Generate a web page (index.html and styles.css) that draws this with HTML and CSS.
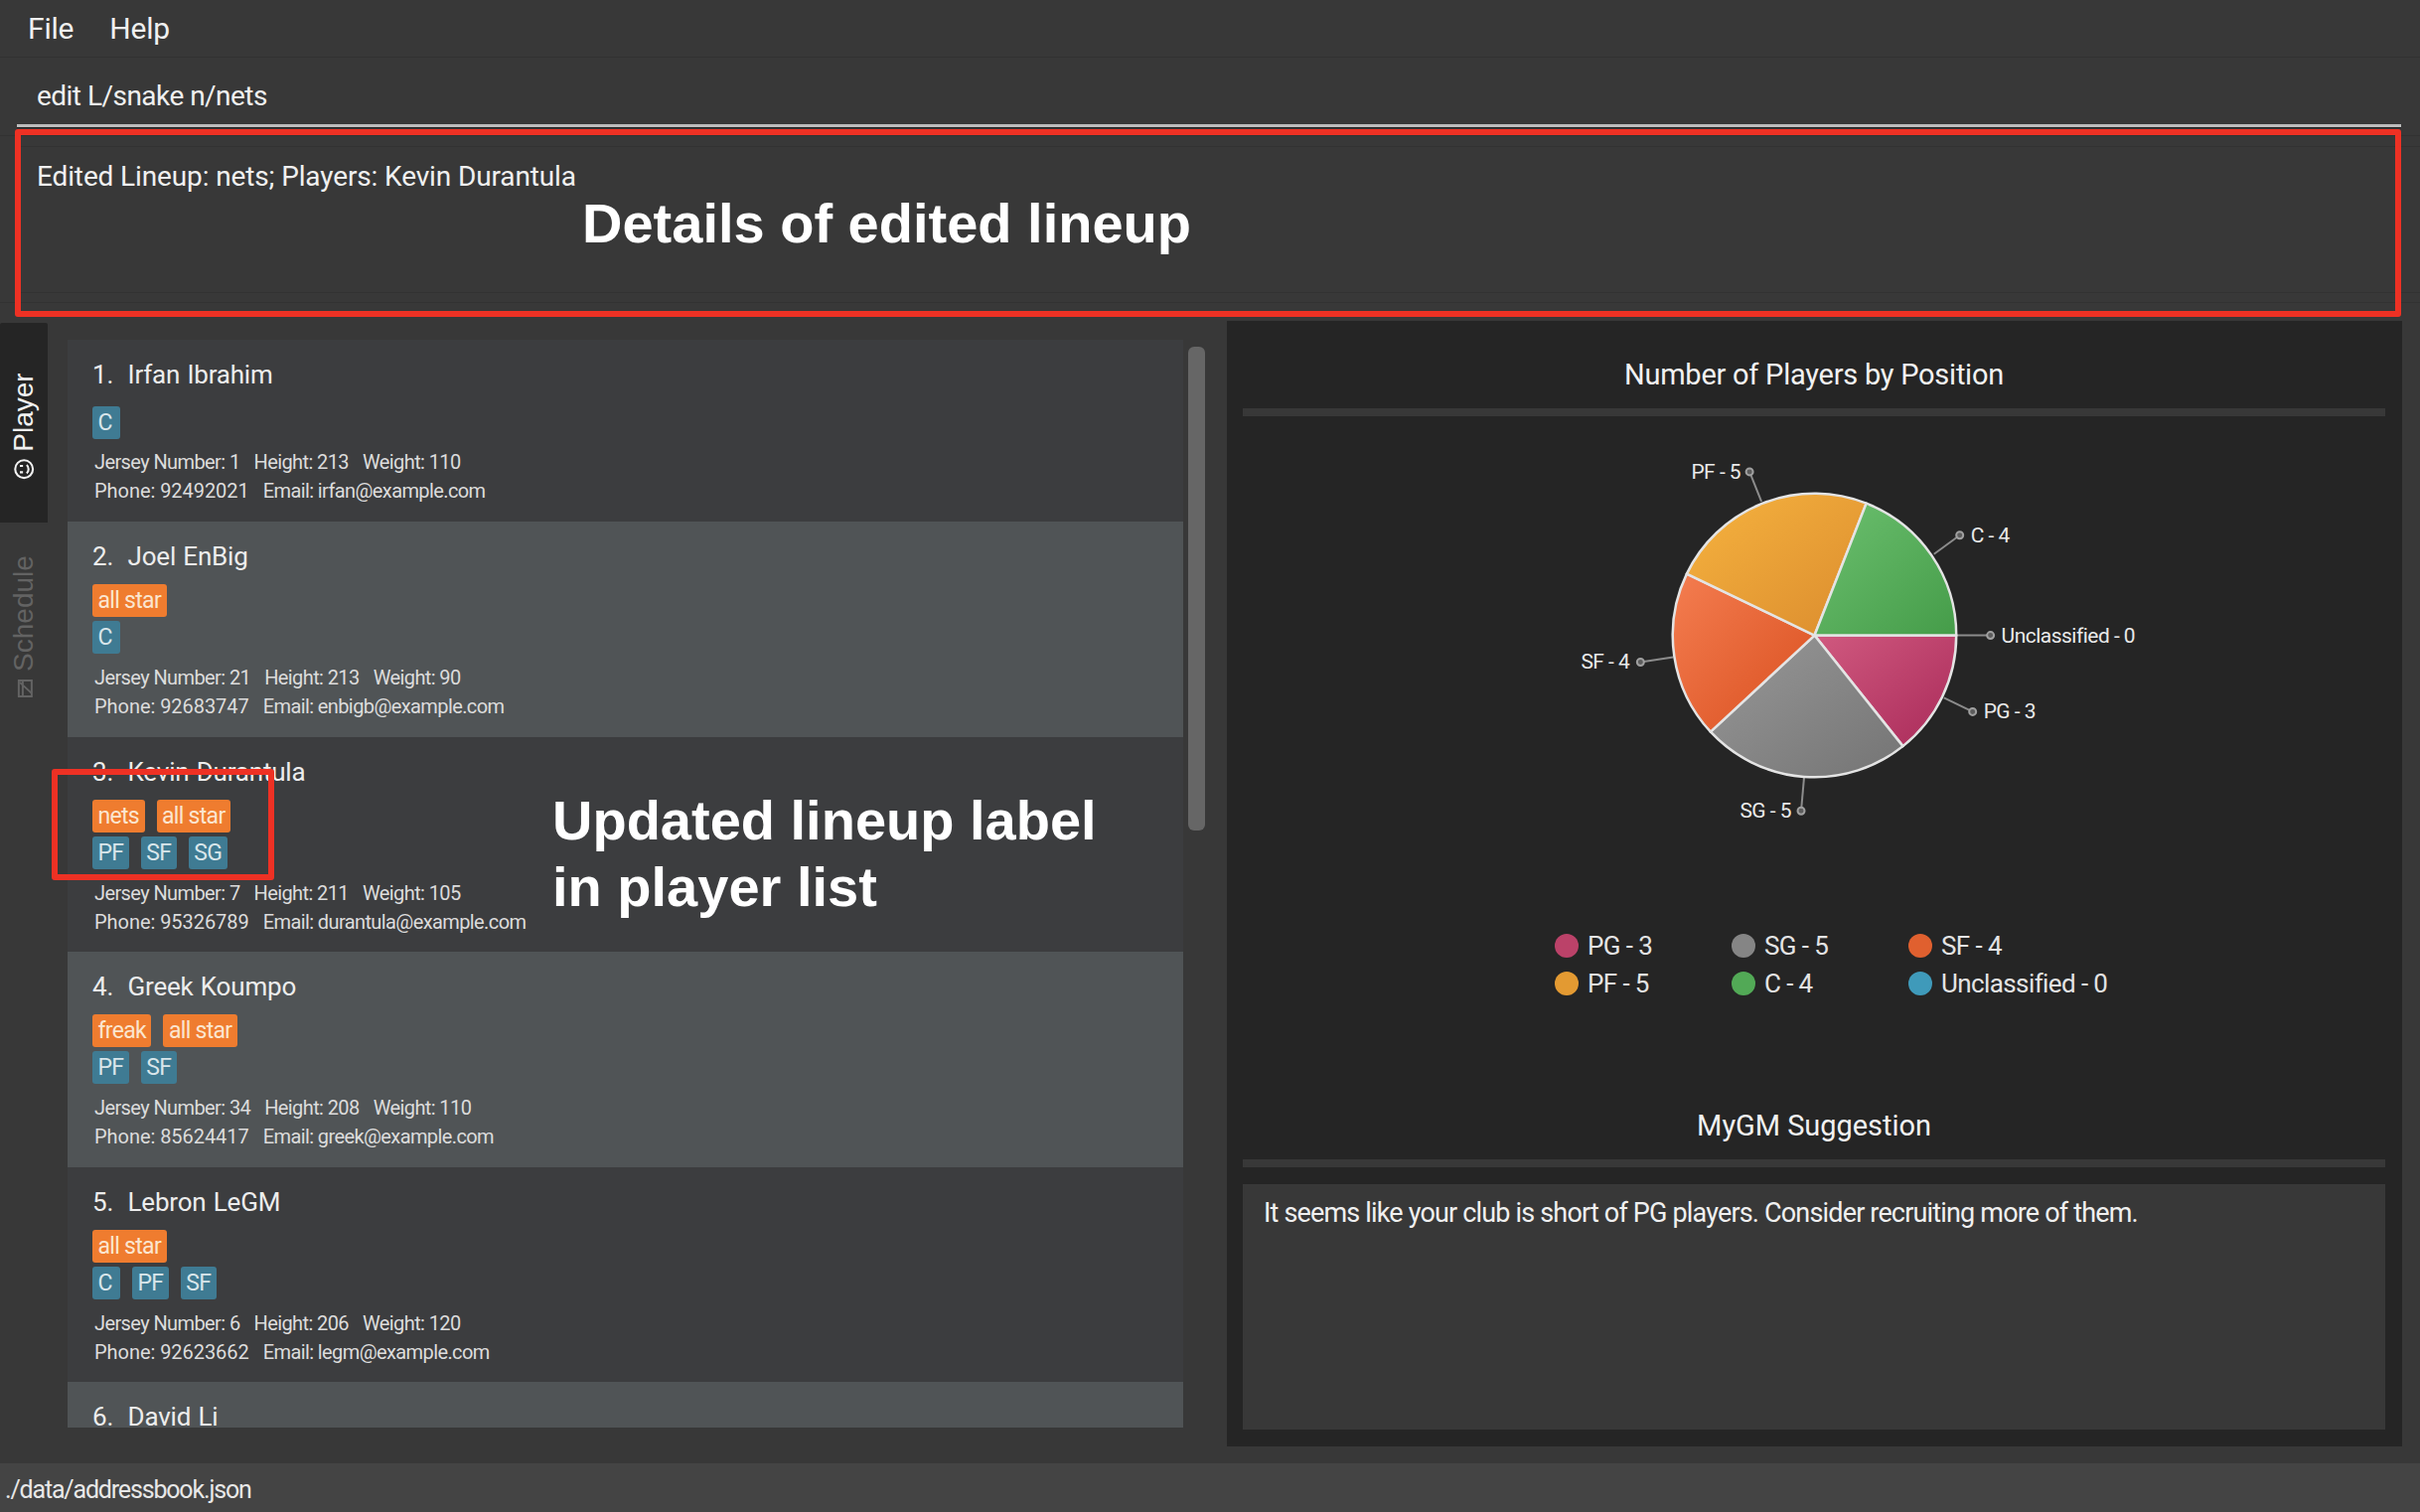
FILE: index.html
```html
<!DOCTYPE html>
<html lang="en">
<head>
    <meta charset="UTF-8">
    <title>MyGM</title>
    <link rel="stylesheet" href="styles.css">
</head>
<body>
<div class="window">
    <!-- Menu -->
    <div class="menu">
        <span>File</span>
        <span>Help</span>
    </div>

    <!-- Command box -->
    <div class="command">
        <div class="command-input">edit L/snake n/nets</div>
    </div>

    <!-- Result box -->
    <div class="result">
        <div class="result-text">Edited Lineup: nets; Players: Kevin Durantula</div>
    </div>

    <div class="main">
        <!-- Side tabs -->
        <div class="tabs">
            <div class="tab tab-active">
                <div class="tab-label">
                    <svg class="tab-icon" viewBox="0 0 20 20" fill="none" stroke="currentColor" stroke-width="2">
                        <circle cx="10" cy="10" r="8.5"/>
                        <path d="M6 12.5c1.8 2.4 6.2 2.4 8 0"/>
                        <path d="M7 6v3M13 6v3"/>
                    </svg>
                    <span>Player</span>
                </div>
            </div>
            <div class="tab">
                <div class="tab-label">
                    <svg class="tab-icon tab-icon-small" viewBox="0 0 20 20" fill="none" stroke="currentColor" stroke-width="2">
                        <path d="M2 5h16v13H2z"/>
                        <path d="M2 9h16M5 18L16 6"/>
                    </svg>
                    <span>Schedule</span>
                </div>
            </div>
        </div>

        <!-- Player list -->
        <div class="list">
            <div class="item item-single">
                <div class="name">1.&nbsp; Irfan Ibrahim</div>
                <div class="tags">
                    <div class="tag-row"><span class="tag tag-pos">C</span></div>
                </div>
                <div class="details">
                    <div class="detail-row"><span>Jersey Number: 1</span><span>Height: 213</span><span>Weight: 110</span></div>
                    <div class="detail-row"><span class="phone">Phone: 92492021</span><span>Email: irfan@example.com</span></div>
                </div>
            </div>
            <div class="item item-even">
                <div class="name">2.&nbsp; Joel EnBig</div>
                <div class="tags">
                    <div class="tag-row"><span class="tag tag-lineup">all star</span></div>
                    <div class="tag-row"><span class="tag tag-pos">C</span></div>
                </div>
                <div class="details">
                    <div class="detail-row"><span>Jersey Number: 21</span><span>Height: 213</span><span>Weight: 90</span></div>
                    <div class="detail-row"><span class="phone">Phone: 92683747</span><span>Email: enbigb@example.com</span></div>
                </div>
            </div>
            <div class="item">
                <div class="name">3.&nbsp; Kevin Durantula</div>
                <div class="tags">
                    <div class="tag-row"><span class="tag tag-lineup">nets</span><span class="tag tag-lineup">all star</span></div>
                    <div class="tag-row"><span class="tag tag-pos">PF</span><span class="tag tag-pos">SF</span><span class="tag tag-pos">SG</span></div>
                </div>
                <div class="details">
                    <div class="detail-row"><span>Jersey Number: 7</span><span>Height: 211</span><span>Weight: 105</span></div>
                    <div class="detail-row"><span class="phone">Phone: 95326789</span><span>Email: durantula@example.com</span></div>
                </div>
            </div>
            <div class="item item-even">
                <div class="name">4.&nbsp; Greek Koumpo</div>
                <div class="tags">
                    <div class="tag-row"><span class="tag tag-lineup">freak</span><span class="tag tag-lineup">all star</span></div>
                    <div class="tag-row"><span class="tag tag-pos">PF</span><span class="tag tag-pos">SF</span></div>
                </div>
                <div class="details">
                    <div class="detail-row"><span>Jersey Number: 34</span><span>Height: 208</span><span>Weight: 110</span></div>
                    <div class="detail-row"><span class="phone">Phone: 85624417</span><span>Email: greek@example.com</span></div>
                </div>
            </div>
            <div class="item">
                <div class="name">5.&nbsp; Lebron LeGM</div>
                <div class="tags">
                    <div class="tag-row"><span class="tag tag-lineup">all star</span></div>
                    <div class="tag-row"><span class="tag tag-pos">C</span><span class="tag tag-pos">PF</span><span class="tag tag-pos">SF</span></div>
                </div>
                <div class="details">
                    <div class="detail-row"><span>Jersey Number: 6</span><span>Height: 206</span><span>Weight: 120</span></div>
                    <div class="detail-row"><span class="phone">Phone: 92623662</span><span>Email: legm@example.com</span></div>
                </div>
            </div>
            <div class="item item-even">
                <div class="name">6.&nbsp; David Li</div>
            </div>
        </div>

        <div class="scroll-track"><div class="scroll-thumb"></div></div>

        <!-- Stats panel -->
        <div class="panel">
            <div class="panel-title">Number of Players by Position</div>
            <div class="panel-rule"></div>
            <svg class="pie" viewBox="1251 419 1150 511">
                <defs>
                    <linearGradient id="g-pg" x1="0" y1="0" x2="1" y2="1"><stop offset="0" stop-color="#d0597f"/><stop offset="1" stop-color="#a92a59"/></linearGradient>
                    <linearGradient id="g-sg" x1="0" y1="0" x2="1" y2="1"><stop offset="0" stop-color="#989898"/><stop offset="1" stop-color="#747474"/></linearGradient>
                    <linearGradient id="g-sf" x1="0" y1="0" x2="1" y2="1"><stop offset="0" stop-color="#f47d50"/><stop offset="1" stop-color="#d94f1f"/></linearGradient>
                    <linearGradient id="g-pf" x1="0" y1="0" x2="1" y2="1"><stop offset="0" stop-color="#f6b33f"/><stop offset="1" stop-color="#db8c2e"/></linearGradient>
                    <linearGradient id="g-c" x1="0" y1="0" x2="1" y2="1"><stop offset="0" stop-color="#6cc06f"/><stop offset="1" stop-color="#459c49"/></linearGradient>
                </defs>
                <g class="leaders">
                    <path d="M1773 505L1761 475"/>
                    <path d="M1947 558L1973 539"/>
                    <path d="M1969 640H2004"/>
                    <path d="M1957 703L1986 717"/>
                    <path d="M1816 783L1813 817"/>
                    <path d="M1684 662L1651 667"/>
                    <circle cx="1761" cy="475" r="3.5"/>
                    <circle cx="1973" cy="539" r="3.5"/>
                    <circle cx="2004" cy="640" r="3.5"/>
                    <circle cx="1986" cy="717" r="3.5"/>
                    <circle cx="1813" cy="817" r="3.5"/>
                    <circle cx="1651" cy="667" r="3.5"/>
                </g>
                <g class="slices">
                    <path fill="url(#g-pg)" d="M1826.5 640H1969.5A143 143 0 0 1 1915.66 751.8Z"/>
                    <path fill="url(#g-sg)" d="M1826.5 640L1915.66 751.8A143 143 0 0 1 1721.67 737.27Z"/>
                    <path fill="url(#g-sf)" d="M1826.5 640L1721.67 737.27A143 143 0 0 1 1697.66 577.95Z"/>
                    <path fill="url(#g-pf)" d="M1826.5 640L1697.66 577.95A143 143 0 0 1 1878.74 506.88Z"/>
                    <path fill="url(#g-c)" d="M1826.5 640L1878.74 506.88A143 143 0 0 1 1969.5 640Z"/>
                </g>
                <g class="pie-labels">
                    <text x="1752" y="482" text-anchor="end">PF - 5</text>
                    <text x="1984" y="546">C - 4</text>
                    <text x="2015" y="647">Unclassified - 0</text>
                    <text x="1997" y="724">PG - 3</text>
                    <text x="1803" y="824" text-anchor="end">SG - 5</text>
                    <text x="1640" y="674" text-anchor="end">SF - 4</text>
                </g>
            </svg>
            <div class="legend">
                <div class="legend-item"><span class="dot dot-pg"></span>PG - 3</div>
                <div class="legend-item"><span class="dot dot-sg"></span>SG - 5</div>
                <div class="legend-item"><span class="dot dot-sf"></span>SF - 4</div>
                <div class="legend-item"><span class="dot dot-pf"></span>PF - 5</div>
                <div class="legend-item"><span class="dot dot-c"></span>C - 4</div>
                <div class="legend-item"><span class="dot dot-un"></span>Unclassified - 0</div>
            </div>
            <div class="panel-title panel-title-second">MyGM Suggestion</div>
            <div class="panel-rule"></div>
            <div class="suggestion">It seems like your club is short of PG players. Consider recruiting more of them.</div>
        </div>
    </div>

    <div class="status">./data/addressbook.json</div>

    <!-- Annotations on top of the screenshot -->
    <div class="mark mark-result"></div>
    <div class="mark mark-label"></div>
    <div class="note note-result">Details of edited lineup</div>
    <div class="note note-label">Updated lineup label<br>in player list</div>
</div>
</body>
</html>
```

FILE: styles.css
```css
* {
    margin: 0;
    padding: 0;
    box-sizing: border-box;
}

body {
    font-family: Roboto, "Liberation Sans", sans-serif;
    background: #383838;
    color: #f0f0f0;
    overflow: hidden;
}

.window {
    position: relative;
    display: flex;
    flex-direction: column;
    width: 2436px;
    height: 1522px;
    overflow: hidden;
}

/* Menu */
.menu {
    display: flex;
    align-items: center;
    gap: 36px;
    height: 58px;
    padding-left: 28px;
    border-bottom: 1px solid #323232;
    font-size: 30px;
    letter-spacing: -0.2px;
}

/* Command box */
.command {
    height: 79px;
    padding: 0 19px 0 17px;
    border-bottom: 1px solid #323232;
}

.command-input {
    height: 70px;
    padding: 22px 0 0 20px;
    border-bottom: 3px solid #bdbdbd;
    box-shadow: 0 1px 0 #222;
    font-size: 28px;
    line-height: 34px;
    letter-spacing: -0.53px;
}

/* Result box */
.result {
    height: 168px;
    padding: 10px 0 10px 17px;
    border-bottom: 1px solid #323232;
}

.result-text {
    height: 148px;
    padding: 13px 0 0 20px;
    border-top: 1px solid #323232;
    border-bottom: 1px solid #323232;
    font-size: 28px;
    line-height: 34px;
    letter-spacing: -0.13px;
}

/* Main row */
.main {
    display: flex;
    flex: 1;
    min-height: 0;
    padding-top: 18px;
}

.tabs {
    width: 48px;
    margin-top: 2px;
}

.tab {
    display: flex;
    align-items: center;
    justify-content: center;
    width: 48px;
    height: 210px;
    color: #636363;
    font-family: "Liberation Sans", Arial, sans-serif;
    font-size: 28px;
}

.tab-active {
    height: 201px;
    padding-top: 6px;
    background: #252525;
    border-radius: 2px 2px 0 0;
    color: #f2f2f2;
}

.tab-label {
    display: flex;
    align-items: center;
    gap: 7px;
    transform: rotate(-90deg);
    white-space: nowrap;
}

.tab-icon {
    width: 21px;
    height: 21px;
}

.tab-icon-small {
    width: 20px;
    height: 20px;
}

/* Player list */
.list {
    width: 1123px;
    height: 1095px;
    margin: 19px 0 0 20px;
    overflow: hidden;
}

.item {
    padding: 18px 0 15.5px 25px;
    background: #3c3d3f;
}

.item-even {
    background: #505456;
}

.item-single {
    padding-bottom: 16px;
}

.name {
    font-size: 26px;
    line-height: 34px;
    letter-spacing: -0.2px;
    word-spacing: 1px;
    color: #ededed;
}

.tags {
    display: flex;
    flex-direction: column;
    gap: 4px;
    margin-top: 11px;
}

.item-single .tags {
    margin-top: 15px;
}

.tag-row {
    display: flex;
    gap: 12px;
}

.tag {
    min-width: 28px;
    height: 33px;
    padding: 0 5.5px;
    border-radius: 3px;
    font-size: 23px;
    line-height: 33px;
    letter-spacing: -0.7px;
}

.tag-lineup {
    background: #ef7c2f;
    color: #fbe6d0;
}

.tag-pos {
    background: #3f7b93;
    color: #d9e6ea;
}

.details {
    margin: 10px 0 0 2px;
    font-size: 20px;
    line-height: 29px;
    letter-spacing: -0.6px;
    color: #dcdcdc;
}

.item-single .details {
    margin-top: 9px;
}

.detail-row {
    display: flex;
    gap: 14px;
}

.phone {
    letter-spacing: -0.05px;
}

.scroll-track {
    width: 17px;
    margin: 26px 22px 0 5px;
}

.scroll-thumb {
    height: 487px;
    background: #666;
    border-radius: 6px;
}

/* Stats panel */
.panel {
    display: flex;
    flex-direction: column;
    width: 1183px;
    height: 1133px;
    padding: 0 17px 17px 16px;
    background: #252525;
}

.panel-title {
    height: 88px;
    padding-top: 37px;
    text-align: center;
    font-size: 29px;
    line-height: 34px;
    letter-spacing: -0.25px;
    color: #f2f2f2;
}

.panel-title-second {
    height: 72px;
    padding-top: 20px;
    letter-spacing: -0.05px;
}

.panel-rule {
    height: 8px;
    background: #383838;
}

.pie {
    display: block;
    width: 1150px;
    height: 511px;
}

.leaders path {
    fill: none;
    stroke: #8c8c8c;
    stroke-width: 2;
}

.leaders circle {
    fill: #5c5c5c;
    stroke: #a0a0a0;
    stroke-width: 2;
}

.slices path {
    stroke: #e4e4e4;
    stroke-width: 2.5;
    stroke-linejoin: round;
}

.pie-labels text {
    font-size: 21px;
    letter-spacing: -0.5px;
    fill: #eaeaea;
}

.legend {
    display: grid;
    grid-template-columns: repeat(3, 178px);
    grid-auto-rows: 38px;
    width: 534px;
    height: 163px;
    margin: 4px 0 0 314px;
}

.legend-item {
    display: flex;
    align-items: center;
    gap: 9px;
    font-size: 26px;
    letter-spacing: -0.6px;
    white-space: nowrap;
    color: #e4e4e4;
}

.dot {
    flex-shrink: 0;
    width: 24px;
    height: 24px;
    border-radius: 50%;
}

.dot-pg { background: #bb4269; }
.dot-sg { background: #858585; }
.dot-sf { background: #e0602f; }
.dot-pf { background: #e39a32; }
.dot-c { background: #52a956; }
.dot-un { background: #3f9aba; }

.suggestion {
    height: 247px;
    margin-top: 17px;
    padding: 12px 0 0 21px;
    background: #383838;
    font-size: 27px;
    line-height: 34px;
    letter-spacing: -0.83px;
}

/* Status bar */
.status {
    height: 49px;
    padding-left: 5px;
    background: #444;
    font-size: 25px;
    line-height: 53px;
    letter-spacing: -1.17px;
    color: #e8e8e8;
}

/* Annotations */
.mark {
    position: absolute;
    border: 6px solid #ee3124;
    border-radius: 3px;
}

.mark-result {
    left: 15px;
    top: 130px;
    width: 2402px;
    height: 189px;
}

.mark-label {
    left: 52px;
    top: 774px;
    width: 224px;
    height: 112px;
}

.note {
    position: absolute;
    font-family: "Liberation Sans", Arial, sans-serif;
    font-weight: bold;
    color: #fff;
    white-space: nowrap;
}

.note-result {
    left: 586px;
    top: 194px;
    font-size: 56px;
    line-height: 62px;
}

.note-label {
    left: 556px;
    top: 792px;
    font-size: 56px;
    line-height: 67px;
}
```
